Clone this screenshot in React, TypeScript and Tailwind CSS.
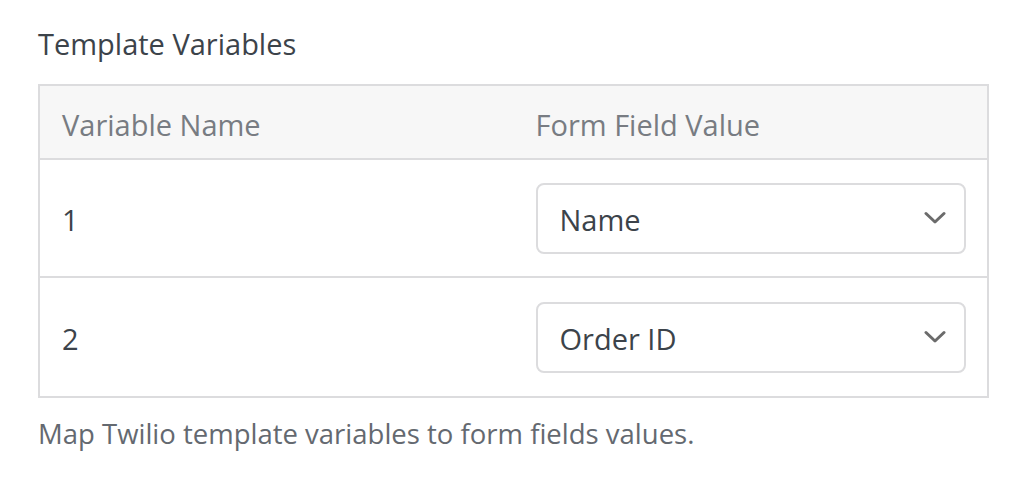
import React from 'react';

const rows = [
  { name: '1', value: 'Name' },
  { name: '2', value: 'Order ID' },
];

function Chevron() {
  return (
    <svg width="22" height="14" viewBox="0 0 22 14" fill="none" className="shrink-0">
      <path d="M2 2.5 L11 11 L20 2.5" stroke="#6b6b6b" strokeWidth="3" strokeLinecap="round" strokeLinejoin="round" />
    </svg>
  );
}

export default function App() {
  return (
    <div className="min-h-screen bg-white px-[38px] pt-[24px]" style={{ fontFamily: '"Open Sans", "Noto Sans", sans-serif' }}>
      <h2 className="text-[29px] leading-[40px] text-[#3c434a]">Template Variables</h2>
      <div className="mt-[20px] border-2 border-[#dcdcde] w-[951px]">
        <div className="grid grid-cols-2 bg-[#f7f7f7] border-b-2 border-[#dcdcde] h-[74px] items-center pt-[5px] text-[29px] text-[#787c82]">
          <div className="pl-[22px]">Variable Name</div>
          <div className="pl-[22px]">Form Field Value</div>
        </div>
        {rows.map((r, i) => (
          <div key={r.name} className={`grid grid-cols-2 items-center h-[118px] ${i < rows.length - 1 ? 'border-b-2 border-[#dcdcde]' : ''}`}>
            <div className="pl-[22px] text-[29px] leading-[40px] pt-[4px] text-[#3c434a]">{r.name}</div>
            <div className="pl-[22px] pr-[21px]">
              <div className="flex items-center justify-between h-[71px] border-2 border-[#dcdcde] rounded-[8px] pl-[22px] pr-[18px] text-[29px] text-[#3c434a]">
                <span className="pt-[4px]">{r.value}</span>
                <Chevron />
              </div>
            </div>
          </div>
        ))}
      </div>
      <p className="mt-[16px] text-[27.5px] leading-[40px] text-[#646970]">Map Twilio template variables to form fields values.</p>
    </div>
  );
}
